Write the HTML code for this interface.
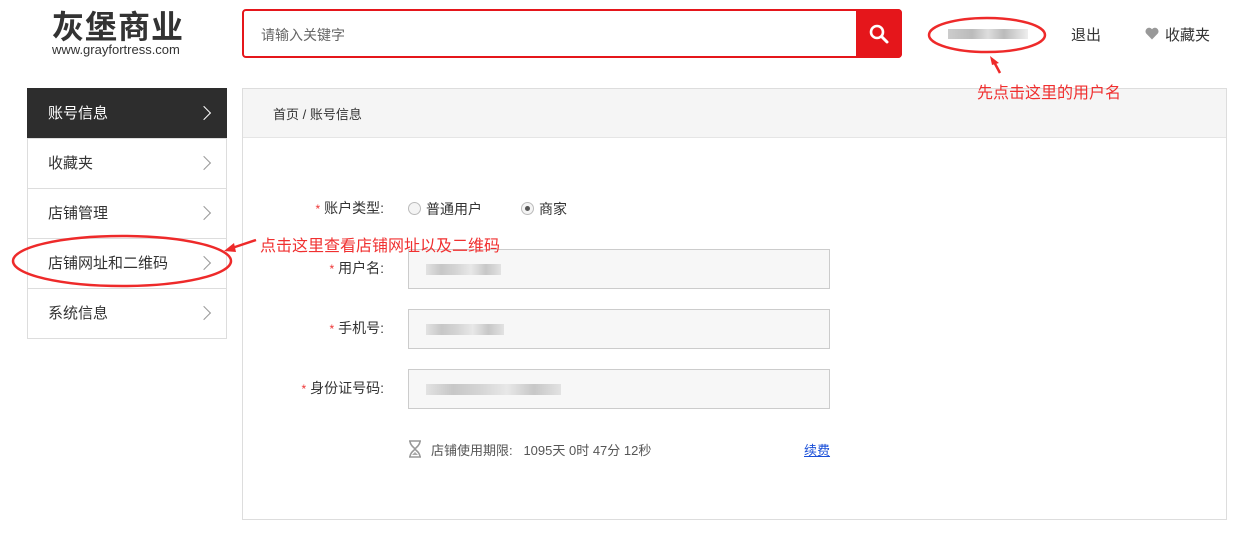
<!DOCTYPE html>
<html><head><meta charset="utf-8">
<style>
*{margin:0;padding:0;box-sizing:border-box}
body{width:1243px;height:541px;background:#fff;position:relative;overflow:hidden;font-family:"Liberation Sans","Noto Sans CJK SC",sans-serif;color:#333;font-size:14px}
.a{position:absolute;white-space:nowrap}
.side div{position:absolute;left:27px;width:200px;height:51px;border:1px solid #ddd;background:#fff;font-size:15px;line-height:49px;padding-left:20px;color:#333}
.side div.on{background:#2d2d2d;color:#fff;border-color:#2d2d2d}
.chev{position:absolute;right:17px;top:19px;width:10px;height:10px;border-right:1.2px solid #999;border-top:1.2px solid #999;transform:rotate(45deg)}
.on .chev{border-color:#fff}
.inp{position:absolute;left:408px;width:422px;height:40px;background:#f7f7f7;border:1px solid #ccc}
.blur{position:absolute;top:14px;left:17px;height:11px;background:linear-gradient(90deg,#ddd,#bbb 20%,#ccc 40%,#e4e4e4 60%,#bbb 80%,#ddd);opacity:.8}
.lbl{position:absolute;right:859px;font-size:14px;color:#333}
.lbl b{color:#e33;font-weight:normal;font-size:12px;margin-right:4px}
.red{color:#f03030;font-size:16px}
</style></head><body>
<div class="a" style="left:52px;top:5px;font-size:32px;font-weight:bold;color:#333;letter-spacing:1px;font-family:'Noto Sans CJK SC',sans-serif;line-height:40px">灰堡商业</div>
<div class="a" style="left:52px;top:42px;font-size:13px;color:#333">www.grayfortress.com</div>
<div class="a" style="left:242px;top:9px;width:660px;height:49px;border:2px solid #e5161b;border-radius:4px;background:#fff"></div>
<div class="a" style="left:261px;top:25px;font-size:14px;color:#666">请输入关键字</div>
<div class="a" style="left:856px;top:9px;width:46px;height:49px;background:#e5161b;border-radius:0 4px 4px 0">
<svg width="46" height="49" viewBox="0 0 46 49"><circle cx="21" cy="23" r="6" fill="none" stroke="#fff" stroke-width="2.6"/><line x1="25.5" y1="27.5" x2="31" y2="33" stroke="#fff" stroke-width="3" stroke-linecap="round"/></svg></div>
<div class="a" style="left:948px;top:29px;width:80px;height:10px;background:linear-gradient(90deg,#ccc,#bbb 30%,#ddd 50%,#bbb 70%,#eee)"></div>
<div class="a" style="left:1071px;top:24px;font-size:15px;color:#333">退出</div>
<svg class="a" style="left:1145px;top:27px" width="14" height="13" viewBox="0 0 14 13"><path d="M7 12.5L1.2 6.5A3.3 3.3 0 0 1 7 2.2A3.3 3.3 0 0 1 12.8 6.5Z" fill="#999"/></svg>
<div class="a" style="left:1165px;top:24px;font-size:15px;color:#333">收藏夹</div>

<div class="side">
<div class="on" style="top:88px">账号信息<i class="chev"></i></div>
<div style="top:138px">收藏夹<i class="chev"></i></div>
<div style="top:188px">店铺管理<i class="chev"></i></div>
<div style="top:238px">店铺网址和二维码<i class="chev"></i></div>
<div style="top:288px">系统信息<i class="chev"></i></div>
</div>

<div class="a" style="left:242px;top:88px;width:985px;height:432px;border:1px solid #ddd"></div>
<div class="a" style="left:243px;top:89px;width:983px;height:49px;background:#f5f5f5;border-bottom:1px solid #e5e5e5"></div>
<div class="a" style="left:273px;top:104px;font-size:13px;color:#333">首页 / 账号信息</div>

<div class="a lbl" style="top:198px"><b>*</b>账户类型:</div>
<div class="a" style="left:408px;top:202px;width:13px;height:13px;border:1px solid #bbb;border-radius:50%;background:#f4f4f4"></div>
<div class="a" style="left:426px;top:199px;font-size:14px">普通用户</div>
<div class="a" style="left:521px;top:202px;width:13px;height:13px;border:1px solid #bbb;border-radius:50%;background:#f4f4f4"><span style="position:absolute;left:3px;top:3px;width:5px;height:5px;border-radius:50%;background:#555"></span></div>
<div class="a" style="left:539px;top:199px;font-size:14px">商家</div>

<div class="a lbl" style="top:258px"><b>*</b>用户名:</div>
<div class="inp" style="top:249px"><span class="blur" style="width:75px"></span></div>
<div class="a lbl" style="top:318px"><b>*</b>手机号:</div>
<div class="inp" style="top:309px"><span class="blur" style="width:78px"></span></div>
<div class="a lbl" style="top:378px"><b>*</b>身份证号码:</div>
<div class="inp" style="top:369px"><span class="blur" style="width:135px"></span></div>

<svg class="a" style="left:408px;top:440px" width="14" height="18" viewBox="0 0 14 18"><path d="M1 1H13M1 17H13M2 1C2 6 7 8 7 9C7 10 2 12 2 17M12 1C12 6 7 8 7 9C7 10 12 12 12 17" fill="none" stroke="#999" stroke-width="1.6"/><path d="M4 15L7 12L10 15Z" fill="#aaa"/></svg>
<div class="a" style="left:431px;top:440px;font-size:13px;color:#555">店铺使用期限:&nbsp;&nbsp; 1095天 0时 47分 12秒</div>
<div class="a" style="left:804px;top:440px;font-size:13px;color:#1a4fd8;text-decoration:underline">续费</div>

<svg class="a" style="left:0;top:0" width="1243" height="541">
<ellipse cx="987" cy="35" rx="58" ry="17" fill="none" stroke="#ee2a2a" stroke-width="2.5"/>
<line x1="1000" y1="73" x2="993" y2="60" stroke="#ee2a2a" stroke-width="2.5"/>
<path d="M990 56L999 63L992 65Z" fill="#ee2a2a"/>
<ellipse cx="122" cy="261" rx="109" ry="25" fill="none" stroke="#ee2a2a" stroke-width="2.5"/>
<line x1="256" y1="240" x2="232" y2="248" stroke="#ee2a2a" stroke-width="2.5"/>
<path d="M224 251L234 243L236 252Z" fill="#ee2a2a"/>
</svg>
<div class="a red" style="left:977px;top:79px">先点击这里的用户名</div>
<div class="a red" style="left:260px;top:232px">点击这里查看店铺网址以及二维码</div>
</body></html>
